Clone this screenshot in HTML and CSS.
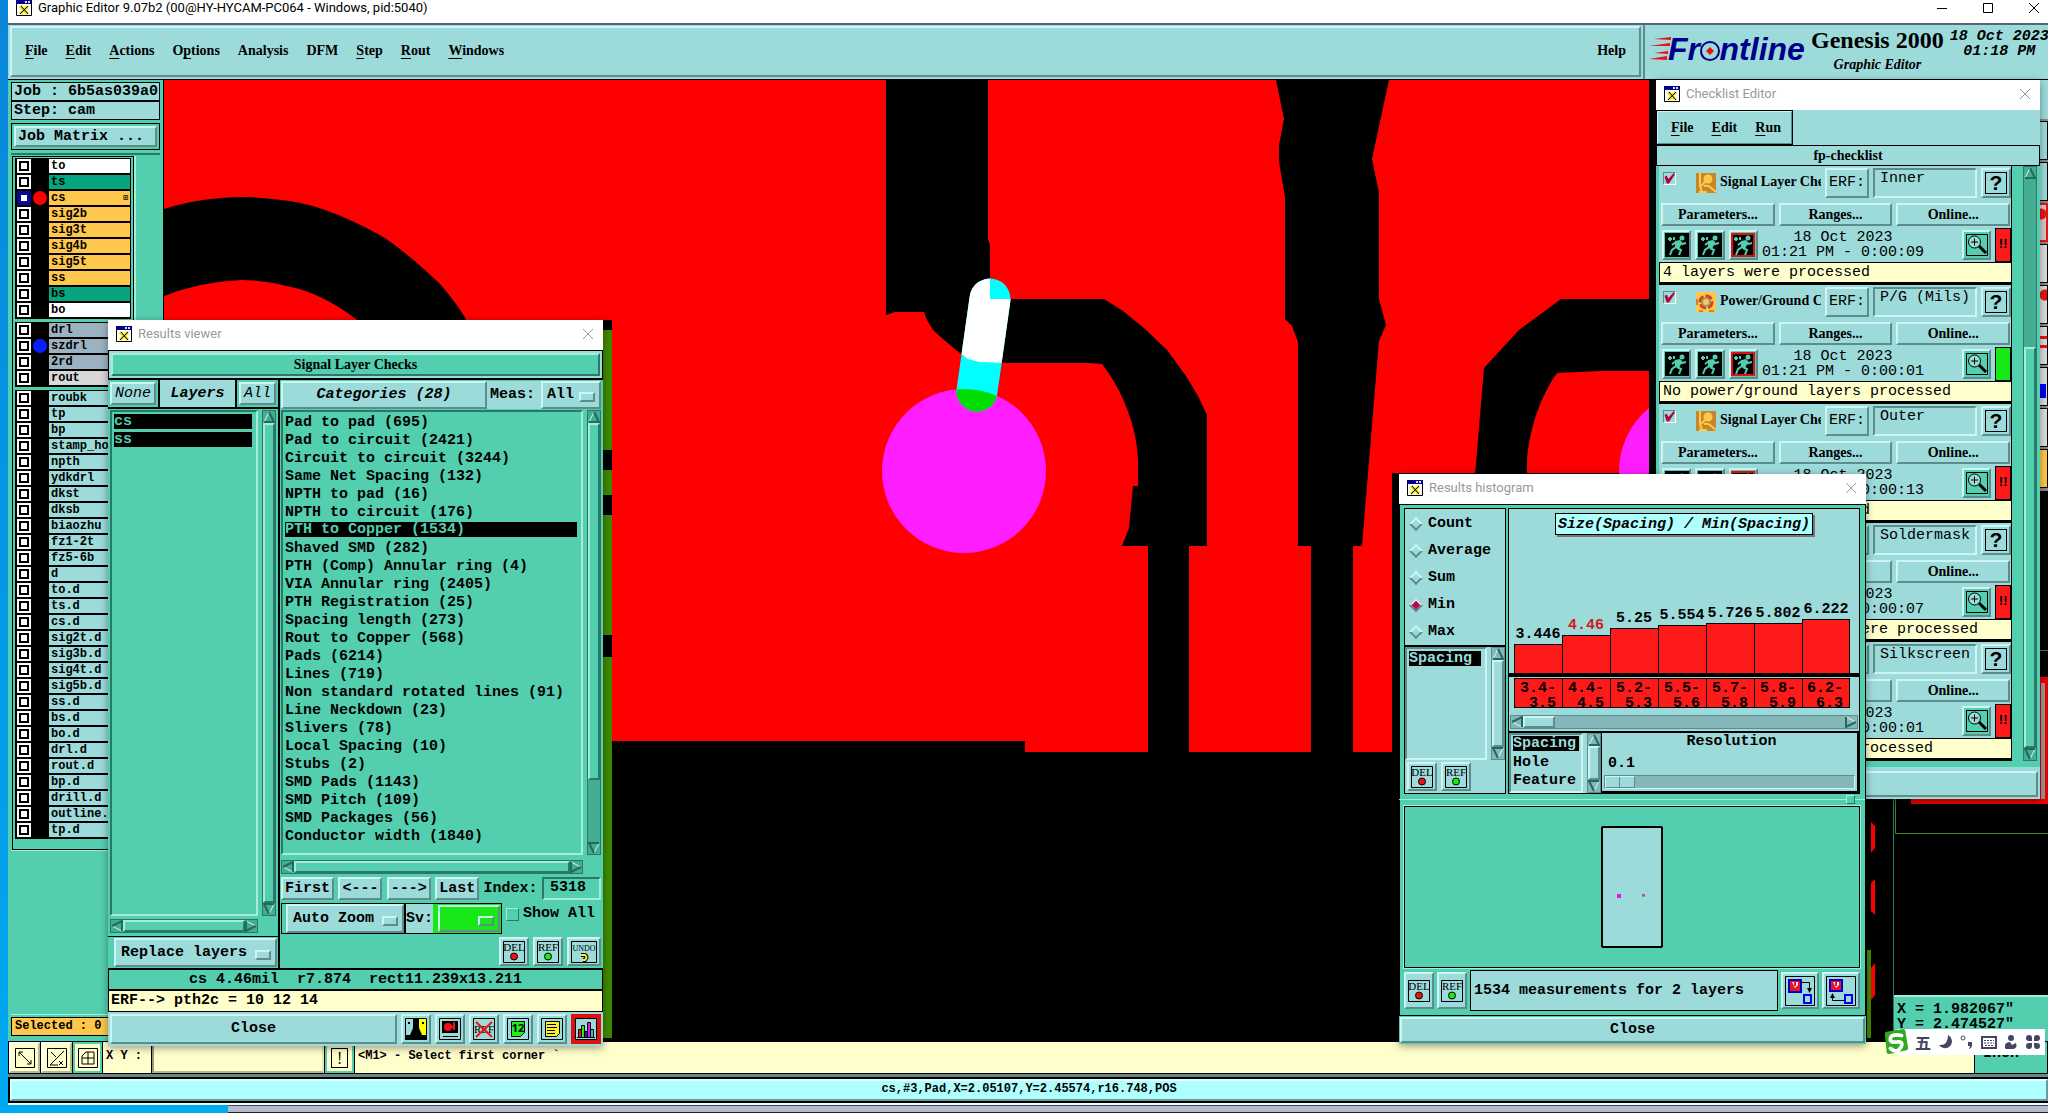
FILE: index.html
```
<!DOCTYPE html>
<html lang="en">
<head>
    <meta charset="UTF-8">
    <meta name="viewport" content="width=device-width, initial-scale=1.0">
    <title>Graphic Editor 9.07b2</title>
    <link rel="stylesheet" href="styles.css">
</head>
<body>
    <!-- shared icons -->
    <svg class="defs" width="0" height="0">
        <symbol id="i-app" viewBox="0 0 16 16"><path fill="#fff" stroke="#000" d="M.5.5h15v15H.5z"/><path fill="#00008b" d="M0 0h16v4H0z"/><path fill="#ddd" d="M9 1h2v2H9zM12 1h2v2h-2z"/><path stroke="#e8e000" stroke-width="3" d="M4 6l8 8M12 6l-8 8"/><path stroke="#000" d="M5 6l7 8M12 6l-8 8"/></symbol>
        <symbol id="i-x" viewBox="0 0 12 12"><path fill="none" stroke="currentColor" d="M1 1l10 10M11 1L1 11"/></symbol>
        <symbol id="i-del" viewBox="0 0 22 22"><path fill="none" stroke="#000" d="M.5.5h21v21H.5z"/><text x="11" y="10" class="ico-text">DEL</text><circle cx="11" cy="15.5" r="3.5" fill="#e11" stroke="#000"/></symbol>
        <symbol id="i-ref" viewBox="0 0 22 22"><path fill="none" stroke="#000" d="M.5.5h21v21H.5z"/><text x="11" y="10" class="ico-text">REF</text><circle cx="11" cy="15.5" r="3.5" fill="#1e1" stroke="#000"/></symbol>
        <symbol id="i-run" viewBox="0 0 24 24"><path fill="#000" d="M0 0h24v24H0z"/><circle cx="17" cy="5" r="2.5" fill="#53cfb0"/><path fill="#53cfb0" d="M10 8l5-1 2 3-3 6-4-1z"/><path fill="none" stroke="#53cfb0" stroke-width="2" d="M15 8l2 3 4-1M12 15l4 2-2 5M11 14l-4 3-2 5M11 9l-4 3M3 6h4M5 4v4M9 4v3"/></symbol>
        <symbol id="i-zoom" viewBox="0 0 24 24"><path fill="none" stroke="#000" d="M1.500 1.500h21v21h-21z"/><circle cx="9.500" cy="9" r="6" fill="#9ddbdb" stroke="#000"/><path stroke="#000" d="M6 9h7M9.500 5.500v7"/><path stroke="#000" stroke-width="3" d="M14 13l7 7"/></symbol>
        <symbol id="i-signal" viewBox="0 0 20 20"><path fill="#c8862c" d="M0 0h20v20H0z"/><circle cx="12" cy="6" r="4.500" fill="#ffc84c"/><path fill="none" stroke="#ffc84c" stroke-width="2" d="M4 0v13l2 6M9 9l-4 4M8 13q4-1 6 1l6 5"/><path fill="#ffc84c" d="M3 18h8v2H3z"/></symbol>
        <symbol id="i-power" viewBox="0 0 20 20"><path fill="#ffc84c" d="M0 0h20v20H0z"/><circle cx="10" cy="10" r="6" fill="none" stroke="#e33c1c" stroke-width="3" stroke-dasharray="7 2"/><circle cx="10" cy="10" r="4" fill="#ffc84c" stroke="#8a9a70" stroke-width="2"/><path fill="#c8862c" d="M0 7h2v6H0zM3 18h4v2H3zM13 18h5v2h-5z"/></symbol>
        <symbol id="i-up" viewBox="0 0 12 12"><path fill="currentColor" stroke="#d4f8f4" d="M1 11L6 1"/><path fill="none" stroke="#246a5c" stroke-width="2" d="M6 1l5 10H1"/></symbol>
    </svg>

    <main class="main-window">
        <header class="titlebar main-title">
            <svg class="app-icon"><use href="#i-app"/></svg>
            <span>Graphic Editor 9.07b2 (00@HY-HYCAM-PC064 - Windows, pid:5040)</span>
            <div class="win-buttons">
                <button aria-label="Minimize"><svg viewBox="0 0 12 12"><path stroke="#000" d="M1 6.500h10"/></svg></button>
                <button aria-label="Maximize"><svg viewBox="0 0 12 12"><path fill="none" stroke="#000" d="M1.500 1.500h9v9h-9z"/></svg></button>
                <button aria-label="Close"><svg><use href="#i-x"/></svg></button>
            </div>
        </header>

        <div class="top">
            <nav class="menubar">
                <a href="#"><u>F</u>ile</a>
                <a href="#"><u>E</u>dit</a>
                <a href="#"><u>A</u>ctions</a>
                <a href="#">O<u>p</u>tions</a>
                <a href="#">Analysis</a>
                <a href="#">DFM</a>
                <a href="#"><u>S</u>tep</a>
                <a href="#"><u>R</u>out</a>
                <a href="#"><u>W</u>indows</a>
                <a href="#" class="help">Help</a>
            </nav>
            <div class="brand">
                <svg class="logo" viewBox="0 0 162 34">
                    <path fill="#e11" d="M5 5l17-2v3zM0 12l21-3v3zM5 19l14-2v3zM0 25l18-3v4z"/>
                    <text x="19" y="26">Frontline</text>
                    <circle cx="61" cy="17" r="9" fill="#9ddbdb" stroke="#00008b" stroke-width="2"/>
                    <path fill="#e11" d="M61 13l4 4-4 4-4-4z"/>
                </svg>
                <div class="product">
                    <div class="product-name">Genesis 2000</div>
                    <div class="product-sub">Graphic Editor</div>
                </div>
                <div class="clock">18 Oct 2023<br>01:18 PM</div>
            </div>
        </div>

        <div class="workspace">
            <aside class="sidebar">
                <div class="info-box">Job : 6b5as039a0</div>
                <div class="info-box">Step: cam</div>
                <div class="matrix"><button class="raised">Job Matrix ...</button></div>
                <div class="layers">
                    <div class="layer-frame">
                        <div class="group">
                            <label class="layer white"><input type="checkbox"><i></i><span>to</span></label>
                            <label class="layer mask"><input type="checkbox"><i></i><span>ts</span></label>
                            <label class="layer copper active"><input type="checkbox" checked><i class="red"></i><span>cs<b>⊞</b></span></label>
                            <label class="layer copper"><input type="checkbox"><i></i><span>sig2b</span></label>
                            <label class="layer copper"><input type="checkbox"><i></i><span>sig3t</span></label>
                            <label class="layer copper"><input type="checkbox"><i></i><span>sig4b</span></label>
                            <label class="layer copper"><input type="checkbox"><i></i><span>sig5t</span></label>
                            <label class="layer copper"><input type="checkbox"><i></i><span>ss</span></label>
                            <label class="layer mask"><input type="checkbox"><i></i><span>bs</span></label>
                            <label class="layer white"><input type="checkbox"><i></i><span>bo</span></label>
                        </div>
                        <div class="group">
                            <label class="layer drill"><input type="checkbox"><i></i><span>drl</span></label>
                            <label class="layer drill"><input type="checkbox"><i class="blue"></i><span>szdrl</span></label>
                            <label class="layer drill"><input type="checkbox"><i></i><span>2rd</span></label>
                            <label class="layer rout"><input type="checkbox"><i></i><span>rout</span></label>
                        </div>
                        <div class="group">
                            <label class="layer"><input type="checkbox"><i></i><span>roubk</span></label>
                            <label class="layer"><input type="checkbox"><i></i><span>tp</span></label>
                            <label class="layer"><input type="checkbox"><i></i><span>bp</span></label>
                            <label class="layer"><input type="checkbox"><i></i><span>stamp_hole</span></label>
                            <label class="layer"><input type="checkbox"><i></i><span>npth</span></label>
                            <label class="layer"><input type="checkbox"><i></i><span>ydkdrl</span></label>
                            <label class="layer"><input type="checkbox"><i></i><span>dkst</span></label>
                            <label class="layer"><input type="checkbox"><i></i><span>dksb</span></label>
                            <label class="layer"><input type="checkbox"><i></i><span>biaozhu</span></label>
                            <label class="layer"><input type="checkbox"><i></i><span>fz1-2t</span></label>
                            <label class="layer"><input type="checkbox"><i></i><span>fz5-6b</span></label>
                            <label class="layer"><input type="checkbox"><i></i><span>d</span></label>
                            <label class="layer"><input type="checkbox"><i></i><span>to.d</span></label>
                            <label class="layer"><input type="checkbox"><i></i><span>ts.d</span></label>
                            <label class="layer"><input type="checkbox"><i></i><span>cs.d</span></label>
                            <label class="layer"><input type="checkbox"><i></i><span>sig2t.d</span></label>
                            <label class="layer"><input type="checkbox"><i></i><span>sig3b.d</span></label>
                            <label class="layer"><input type="checkbox"><i></i><span>sig4t.d</span></label>
                            <label class="layer"><input type="checkbox"><i></i><span>sig5b.d</span></label>
                            <label class="layer"><input type="checkbox"><i></i><span>ss.d</span></label>
                            <label class="layer"><input type="checkbox"><i></i><span>bs.d</span></label>
                            <label class="layer"><input type="checkbox"><i></i><span>bo.d</span></label>
                            <label class="layer"><input type="checkbox"><i></i><span>drl.d</span></label>
                            <label class="layer"><input type="checkbox"><i></i><span>rout.d</span></label>
                            <label class="layer"><input type="checkbox"><i></i><span>bp.d</span></label>
                            <label class="layer"><input type="checkbox"><i></i><span>drill.d</span></label>
                            <label class="layer"><input type="checkbox"><i></i><span>outline.d</span></label>
                            <label class="layer"><input type="checkbox"><i></i><span>tp.d</span></label>
                        </div>
                    </div>
                </div>
                <div class="side-fill"></div>
                <div class="selected">Selected : 0</div>
            </aside>

            <!-- board view -->
            <div class="board">
                <svg viewBox="163 80 1730 961" preserveAspectRatio="xMinYMin slice">
                    <defs>
                        <path id="trace" d="M885 80H987V240L989 245V299H1103L1122 311L1144 329L1166 350L1185 376L1197 396L1206 415V546H1188V752H1147V546H1121L1128 528L1132 486H1137V460C1136 425 1120 388 1101 364L1088 363H1007L978 362L967 359L955 350L942 339L932 330L926 320L923 312H894L885 315Z"/>
                        <clipPath id="c-trace"><use href="#trace"/></clipPath>
                        <clipPath id="c-pad"><circle cx="963" cy="471" r="82"/></clipPath>
                    </defs>
                    <path fill="#000" d="M163 80h1730v961H163z"/>
                    <path fill="#f00" d="M163 80H1648V473H1391V752H1024V741H163z"/>
                    <path fill="#000" d="M163 209Q200 197 245 197Q290 199 315 207Q345 216 384 238Q410 256 440 285Q456 304 465 319V345H375L355 319Q320 293 290 287Q262 280 240 280Q198 282 163 296z"/>
                    <use href="#trace" fill="#000"/>
                    <path fill="#000" d="M1275 80L1283 119L1278 145V162L1284 197V319L1291 326L1297 342V546H1310V752H1352V546H1361L1378 341L1385 325L1378 299V193L1371 159L1388 80z"/>
                    <path fill="#000" d="M1648 299H1560L1518 330L1483 368L1474 475H1526V460C1528 430 1540 395 1556 373L1600 371H1648z"/>
                    <path fill="#ff1eff" d="M1648 408A82 82 0 0 0 1618 475H1648z"/>
                    <circle cx="963" cy="471" r="82" fill="#ff1eff"/>
                    <g fill="none" stroke-width="41" stroke-linecap="round">
                        <path stroke="#0ff" d="M989 299L976 391"/>
                        <path stroke="#fff" clip-path="url(#c-trace)" d="M989 299L976 391"/>
                        <path stroke="#0d0" clip-path="url(#c-pad)" d="M989 299L976 391"/>
                    </g>
                    <path fill="#3f8a00" d="M600 320h11v718h-11zM1866 950h4v88h-4z"/>
                    <path fill="#000" d="M600 320h11v10h-11zM600 450h11v20h-11zM600 495h11v20h-11zM600 635h11v22h-11z"/>
                    <path fill="#f00" d="M1870 822l4 4v22l-4 5zM1870 883l4-4v36l-4-4zM1870 968l4-5v32l-4 5z"/>
                </svg>
            </div>

            <aside class="right-bar">
                <div class="tools">
                    <div class="tool-cap"></div>
                    <button class="tool" aria-label="Cut"></button>
                    <button class="tool" aria-label="Frame"></button>
                    <button class="tool warn" aria-label="Signal"></button>
                    <button class="tool gray" aria-label="Select"></button>
                    <button class="tool gray dot" aria-label="Point"></button>
                    <button class="tool gray lines" aria-label="Lines"></button>
                    <button class="tool gray box" aria-label="Box"></button>
                    <button class="tool gray" aria-label="Measure"></button>
                    <button class="tool gold" aria-label="Pick"></button>
                </div>
                <svg class="mini" viewBox="1893 490 155 504" preserveAspectRatio="xMaxYMin slice">
                    <path fill="#000" d="M1893 490h155v504h-155z"/>
                    <path fill="none" stroke="#3f8a20" d="M1895.500 649.500h160M1895.500 649v183.500h160"/>
                    <path fill="#e00" d="M1911 676h140v127h-140z"/>
                    <path fill="#999" d="M2041 682h4v116h-4z"/>
                </svg>
                <div class="coords">X = 1.982067"<br>Y = 2.474527"</div>
            </aside>
        </div>

        <footer class="command">
            <button class="cmd" aria-label="Snap"><svg viewBox="0 0 20 20"><path fill="none" stroke="#000" d="M.5.5h19v19H.5zM4 4l12 12M4 8V4h4M16 12v4h-4"/></svg></button>
            <button class="cmd" aria-label="Angle"><svg viewBox="0 0 20 20"><path fill="none" stroke="#000" d="M.5.5h19v19H.5zM3 17L17 3M3 17h8M4 4l5 5M12 13l4 4M16 13l-4 4"/></svg></button>
            <button class="cmd green" aria-label="Grid"><svg viewBox="0 0 20 20"><path fill="none" stroke="#000" d="M.5.5h19v19H.5zM4 16V8l4-4h8v12zM4 10h12M10 4v12"/></svg></button>
            <label class="xy" for="xy">X Y :</label>
            <input id="xy" type="text">
            <button class="cmd green bang"><span>!</span></button>
            <div class="message">&lt;M1&gt; - Select first corner `</div>
            <label class="unit"><select aria-label="Units"><option>Inch</option></select></label>
        </footer>
        <div class="status"><div>cs,#3,Pad,X=2.05107,Y=2.45574,r16.748,POS</div></div>
    </main>
    <div class="taskbar"></div>

    <!-- Checklist Editor -->
    <section class="window checklist">
        <header class="titlebar">
            <svg class="app-icon"><use href="#i-app"/></svg>
            <span>Checklist Editor</span>
            <button class="close-x" aria-label="Close"><svg><use href="#i-x"/></svg></button>
        </header>
        <nav class="sub-menu raised">
            <a href="#"><u>F</u>ile</a>
            <a href="#"><u>E</u>dit</a>
            <a href="#"><u>R</u>un</a>
        </nav>
        <h2>fp-checklist</h2>
        <div class="check-area">
            <div class="check-list">
                <article class="check">
                    <div class="row1">
                        <input type="checkbox" id="k1" checked>
                        <svg class="kind"><use href="#i-signal"/></svg>
                        <label for="k1">Signal Layer Checks</label>
                        <button class="raised erf">ERF:</button>
                        <input type="text" class="sunken" value="Inner" aria-label="ERF">
                        <button class="raised q"><b>?</b></button>
                    </div>
                    <div class="row2"><button class="raised">Parameters...</button><button class="raised">Ranges...</button><button class="raised">Online...</button></div>
                    <div class="row3">
                        <button class="raised ic" aria-label="Run"><svg><use href="#i-run"/></svg></button>
                        <button class="raised ic" aria-label="Run and edit"><svg><use href="#i-run"/></svg></button>
                        <button class="raised ic hot" aria-label="Run profile"><svg><use href="#i-run"/></svg></button>
                        <time>18 Oct 2023<br>01:21 PM - 0:00:09</time>
                        <button class="raised ic" aria-label="View results"><svg><use href="#i-zoom"/></svg></button>
                        <span class="state">!!</span>
                    </div>
                    <p>4 layers were processed</p>
                </article>
                <article class="check">
                    <div class="row1">
                        <input type="checkbox" id="k2" checked>
                        <svg class="kind"><use href="#i-power"/></svg>
                        <label for="k2">Power/Ground Checks</label>
                        <button class="raised erf">ERF:</button>
                        <input type="text" class="sunken" value="P/G (Mils)" aria-label="ERF">
                        <button class="raised q"><b>?</b></button>
                    </div>
                    <div class="row2"><button class="raised">Parameters...</button><button class="raised">Ranges...</button><button class="raised">Online...</button></div>
                    <div class="row3">
                        <button class="raised ic" aria-label="Run"><svg><use href="#i-run"/></svg></button>
                        <button class="raised ic" aria-label="Run and edit"><svg><use href="#i-run"/></svg></button>
                        <button class="raised ic hot" aria-label="Run profile"><svg><use href="#i-run"/></svg></button>
                        <time>18 Oct 2023<br>01:21 PM - 0:00:01</time>
                        <button class="raised ic" aria-label="View results"><svg><use href="#i-zoom"/></svg></button>
                        <span class="state ok"></span>
                    </div>
                    <p>No power/ground layers processed</p>
                </article>
                <article class="check">
                    <div class="row1">
                        <input type="checkbox" id="k3" checked>
                        <svg class="kind"><use href="#i-signal"/></svg>
                        <label for="k3">Signal Layer Checks</label>
                        <button class="raised erf">ERF:</button>
                        <input type="text" class="sunken" value="Outer" aria-label="ERF">
                        <button class="raised q"><b>?</b></button>
                    </div>
                    <div class="row2"><button class="raised">Parameters...</button><button class="raised">Ranges...</button><button class="raised">Online...</button></div>
                    <div class="row3">
                        <button class="raised ic" aria-label="Run"><svg><use href="#i-run"/></svg></button>
                        <button class="raised ic" aria-label="Run and edit"><svg><use href="#i-run"/></svg></button>
                        <button class="raised ic hot" aria-label="Run profile"><svg><use href="#i-run"/></svg></button>
                        <time>18 Oct 2023<br>01:21 PM - 0:00:13</time>
                        <button class="raised ic" aria-label="View results"><svg><use href="#i-zoom"/></svg></button>
                        <span class="state">!!</span>
                    </div>
                    <p>2 layers were processed</p>
                </article>
                <article class="check">
                    <div class="row1">
                        <input type="checkbox" id="k4" checked>
                        <svg class="kind"><use href="#i-signal"/></svg>
                        <label for="k4">Solder Mask Checks</label>
                        <button class="raised erf">ERF:</button>
                        <input type="text" class="sunken" value="Soldermask" aria-label="ERF">
                        <button class="raised q"><b>?</b></button>
                    </div>
                    <div class="row2"><button class="raised">Parameters...</button><button class="raised">Ranges...</button><button class="raised">Online...</button></div>
                    <div class="row3">
                        <button class="raised ic" aria-label="Run"><svg><use href="#i-run"/></svg></button>
                        <button class="raised ic" aria-label="Run and edit"><svg><use href="#i-run"/></svg></button>
                        <button class="raised ic hot" aria-label="Run profile"><svg><use href="#i-run"/></svg></button>
                        <time>18 Oct 2023<br>01:21 PM - 0:00:07</time>
                        <button class="raised ic" aria-label="View results"><svg><use href="#i-zoom"/></svg></button>
                        <span class="state">!!</span>
                    </div>
                    <p>2 solder mask layers were processed</p>
                </article>
                <article class="check">
                    <div class="row1">
                        <input type="checkbox" id="k5" checked>
                        <svg class="kind"><use href="#i-signal"/></svg>
                        <label for="k5">Silk Screen Checks</label>
                        <button class="raised erf">ERF:</button>
                        <input type="text" class="sunken" value="Silkscreen" aria-label="ERF">
                        <button class="raised q"><b>?</b></button>
                    </div>
                    <div class="row2"><button class="raised">Parameters...</button><button class="raised">Ranges...</button><button class="raised">Online...</button></div>
                    <div class="row3">
                        <button class="raised ic" aria-label="Run"><svg><use href="#i-run"/></svg></button>
                        <button class="raised ic" aria-label="Run and edit"><svg><use href="#i-run"/></svg></button>
                        <button class="raised ic hot" aria-label="Run profile"><svg><use href="#i-run"/></svg></button>
                        <time>18 Oct 2023<br>01:21 PM - 0:00:01</time>
                        <button class="raised ic" aria-label="View results"><svg><use href="#i-zoom"/></svg></button>
                        <span class="state">!!</span>
                    </div>
                    <p>No silkscreen layers processed</p>
                </article>
            </div>
            <div class="vscroll low"><svg class="up"><use href="#i-up"/></svg><i></i><svg class="down"><use href="#i-up"/></svg></div>
        </div>
        <button class="raised check-close" aria-label="Close"></button>
    </section>

    <!-- Results viewer -->
    <section class="window results">
        <header class="titlebar">
            <svg class="app-icon"><use href="#i-app"/></svg>
            <span>Results viewer</span>
            <button class="close-x" aria-label="Close"><svg><use href="#i-x"/></svg></button>
        </header>
        <h2><span class="raised">Signal Layer Checks</span></h2>
        <div class="panes">
            <div class="pane pane-layers">
                <div class="pane-head">
                    <div><button class="raised">None</button></div>
                    <h3>Layers</h3>
                    <div><button class="raised">All</button></div>
                </div>
                <div class="scroll-box">
                    <ul class="list">
                        <li class="on">cs</li>
                        <li class="on">ss</li>
                    </ul>
                    <div class="vscroll full"><svg class="up"><use href="#i-up"/></svg><i></i><svg class="down"><use href="#i-up"/></svg></div>
                </div>
                <div class="hscroll"><svg class="left"><use href="#i-up"/></svg><i></i><svg class="right"><use href="#i-up"/></svg></div>
                <div class="replace"><label class="raised option"><select aria-label="Replace layers"><option>Replace layers</option></select></label></div>
            </div>
            <div class="pane pane-cats">
                <div class="pane-head">
                    <button class="raised">Categories (28)</button>
                    <label for="meas">Meas:</label>
                    <span class="raised option"><select id="meas"><option>All</option></select></span>
                </div>
                <div class="scroll-box">
                    <ul class="list">
                        <li>Pad to pad (695)</li>
                        <li>Pad to circuit (2421)</li>
                        <li>Circuit to circuit (3244)</li>
                        <li>Same Net Spacing (132)</li>
                        <li>NPTH to pad (16)</li>
                        <li>NPTH to circuit (176)</li>
                        <li class="on">PTH to Copper (1534)</li>
                        <li>Shaved SMD (282)</li>
                        <li>PTH (Comp) Annular ring (4)</li>
                        <li>VIA Annular ring (2405)</li>
                        <li>PTH Registration (25)</li>
                        <li>Spacing length (273)</li>
                        <li>Rout to Copper (568)</li>
                        <li>Pads (6214)</li>
                        <li>Lines (719)</li>
                        <li>Non standard rotated lines (91)</li>
                        <li>Line Neckdown (23)</li>
                        <li>Slivers (78)</li>
                        <li>Local Spacing (10)</li>
                        <li>Stubs (2)</li>
                        <li>SMD Pads (1143)</li>
                        <li>SMD Pitch (109)</li>
                        <li>SMD Packages (56)</li>
                        <li>Conductor width (1840)</li>
                    </ul>
                    <div class="vscroll part"><svg class="up"><use href="#i-up"/></svg><i></i><svg class="down"><use href="#i-up"/></svg></div>
                </div>
                <div class="hscroll"><svg class="left"><use href="#i-up"/></svg><i></i><svg class="right"><use href="#i-up"/></svg></div>
                <div class="pager">
                    <button class="raised">First</button>
                    <button class="raised">&lt;---</button>
                    <button class="raised">---&gt;</button>
                    <button class="raised">Last</button>
                    <label for="idx">Index:</label>
                    <input id="idx" class="sunken" type="text" value="5318">
                </div>
                <div class="zoomrow">
                    <div class="zoomrow-box">
                        <label class="raised option"><select aria-label="Zoom"><option>Auto Zoom</option></select></label>
                        <label for="sv" class="sv">Sv:</label>
                        <span class="sv-color"><span class="raised option"><select id="sv"><option></option></select></span></span>
                    </div>
                    <label class="show-all"><input type="checkbox">Show All</label>
                </div>
                <div class="acts">
                    <button class="raised" aria-label="Delete"><svg><use href="#i-del"/></svg></button>
                    <button class="raised" aria-label="Reference"><svg><use href="#i-ref"/></svg></button>
                    <button class="raised wide" aria-label="Undo"><svg viewBox="0 0 26 22"><path fill="none" stroke="#000" d="M.5.5h25v21H.5z"/><text x="13" y="10" class="ico-undo">UNDO</text><path fill="none" stroke="#000" stroke-width="4" d="M10 14h4q3 2 0 5h-2"/><path fill="none" stroke="#fe3" stroke-width="2" d="M10 14h4q3 2 0 5h-2"/></svg></button>
                </div>
            </div>
        </div>
        <div class="measure">cs 4.46mil&nbsp; r7.874&nbsp; rect11.239x13.211</div>
        <div class="erf-line">ERF--&gt; pth2c = 10 12 14</div>
        <div class="bottom">
            <button class="raised close">Close</button>
            <button class="raised" aria-label="Highlight"><svg viewBox="0 0 22 22"><path fill="#9ddbdb" d="M0 0h11v22H0z"/><path fill="#ff0" d="M11 0h11v22H11z"/><path fill="none" stroke="#000" d="M.5.5h21v21H.5z"/><path fill="#000" d="M8 0h6v10l3 7h5v5H0v-5h5l3-7zM3 4h2v2H3zM17 4h2v2h-2z"/></svg></button>
            <button class="raised" aria-label="Snapshot"><svg viewBox="0 0 22 22"><path fill="none" stroke="#000" d="M.5.5h21v21H.5z"/><path fill="#000" d="M3 3h16v12H3z"/><circle cx="9" cy="9" r="4" fill="#e11"/><path stroke="#e11" stroke-width="2" d="M9 9h7M15 4v8"/><path stroke="#000" d="M4 18.500h15"/></svg></button>
            <button class="raised" aria-label="Clear reference"><svg viewBox="0 0 22 22"><path fill="none" stroke="#000" d="M.5.5h21v21H.5z"/><text x="11" y="15" class="ico-text">REF</text><path stroke="#e11" stroke-width="2" d="M3 4l16 15M19 4L3 19"/></svg></button>
            <button class="raised" aria-label="Numbers"><svg viewBox="0 0 22 22"><path fill="none" stroke="#000" d="M.5.5h21v21H.5z"/><path fill="#2e2" stroke="#000" d="M4.500 3.500h13v11l-4 4h-9z"/><text x="11" y="14" class="ico-num">12</text></svg></button>
            <button class="raised" aria-label="Report"><svg viewBox="0 0 22 22"><path fill="none" stroke="#000" d="M.5.5h21v21H.5z"/><path fill="#fe3" stroke="#000" d="M4.500 3.500h14v12l-3 3h-11z"/><path stroke="#000" d="M6 6.500h9M6 9.500h10M6 12.500h8M6 15.500h8"/></svg></button>
            <button class="raised hot" aria-label="Histogram"><svg viewBox="0 0 22 22"><path fill="none" stroke="#000" d="M.5.5h21v21H.5zM2 19.500h18"/><path fill="#e11" stroke="#000" d="M3.500 11.500h3v8h-3z"/><path fill="#2e2" stroke="#000" d="M6.500 7.500h3v12h-3z"/><path fill="#22c" stroke="#000" d="M9.500 13.500h3v6h-3z"/><path fill="#e1e" stroke="#000" d="M12.500 4.500h3v15h-3z"/><path fill="#2cc" stroke="#000" d="M15.500 11.500h3v8h-3z"/></svg></button>
        </div>
    </section>

    <!-- Results histogram -->
    <section class="window histogram">
        <header class="titlebar">
            <svg class="app-icon"><use href="#i-app"/></svg>
            <span>Results histogram</span>
            <button class="close-x" aria-label="Close"><svg><use href="#i-x"/></svg></button>
        </header>
        <div class="hist-body">
            <div class="hist-top">
                <div class="hist-left">
                    <div class="radios">
                        <label><input type="radio" name="stat">Count</label>
                        <label><input type="radio" name="stat">Average</label>
                        <label><input type="radio" name="stat">Sum</label>
                        <label><input type="radio" name="stat" checked>Min</label>
                        <label><input type="radio" name="stat">Max</label>
                    </div>
                    <div class="scroll-box">
                        <ul class="list"><li class="on">Spacing</li></ul>
                        <div class="vscroll full"><svg class="up"><use href="#i-up"/></svg><i></i><svg class="down"><use href="#i-up"/></svg></div>
                    </div>
                    <div class="acts">
                        <button class="raised" aria-label="Delete"><svg><use href="#i-del"/></svg></button>
                        <button class="raised" aria-label="Reference"><svg><use href="#i-ref"/></svg></button>
                    </div>
                </div>
                <div class="chart">
                    <h3>Size(Spacing) / Min(Spacing)</h3>
                    <div class="bars">
                        <div>3.446<i style="height: 29px"></i></div>
                        <div class="pick">4.46<i style="height: 38px"></i></div>
                        <div>5.25<i style="height: 45px"></i></div>
                        <div>5.554<i style="height: 48px"></i></div>
                        <div>5.726<i style="height: 50px"></i></div>
                        <div>5.802<i style="height: 50px"></i></div>
                        <div>6.222<i style="height: 54px"></i></div>
                    </div>
                    <div class="bins">
                        <div>3.4-<br>3.5</div><div>4.4-<br>4.5</div><div>5.2-<br>5.3</div><div>5.5-<br>5.6</div><div>5.7-<br>5.8</div><div>5.8-<br>5.9</div><div>6.2-<br>6.3</div>
                    </div>
                    <div class="hscroll short"><svg class="left"><use href="#i-up"/></svg><i></i><svg class="right"><use href="#i-up"/></svg></div>
                    <div class="chart-foot">
                        <div class="scroll-box">
                            <ul class="list"><li class="on">Spacing</li><li>Hole</li><li>Feature</li></ul>
                            <div class="vscroll full"><svg class="up"><use href="#i-up"/></svg><i></i><svg class="down"><use href="#i-up"/></svg></div>
                        </div>
                        <div class="resolution">
                            <label for="res">Resolution</label>
                            <output>0.1</output>
                            <input id="res" type="range" min="0" max="100" value="0">
                        </div>
                    </div>
                </div>
            </div>
            <div class="sash"><i></i></div>
            <div class="overview">
                <svg viewBox="0 0 62 122"><rect x="1" y="1" width="60" height="120" rx="1" fill="#9ddbdb" stroke="#000" stroke-width="2"/><path fill="#e1e" d="M16 68h4v4h-4z"/><path fill="#c4a" d="M41 68h3v2h-3z"/><path fill="#6b6" d="M41 70h3v1h-3z"/></svg>
            </div>
            <div class="hist-foot">
                <button class="raised" aria-label="Delete"><svg><use href="#i-del"/></svg></button>
                <button class="raised" aria-label="Reference"><svg><use href="#i-ref"/></svg></button>
                <div class="count">1534 measurements for 2 layers</div>
                <button class="raised big" aria-label="Zoom in"><svg viewBox="0 0 30 30"><path fill="none" stroke="#000" d="M.5.5h29v29H.5zM17 6.500h7.500V14"/><path fill="#000" d="M22 12h5l-2.500 5z"/><path fill="#e12" stroke="#00c" stroke-width="2" d="M4 4h12v12H4z"/><path fill="#eee" d="M7 6h2v4h2V6h2v3l-3 3z"/><path fill="none" stroke="#00e" stroke-width="2" d="M19 19h7v8h-7z"/></svg></button>
                <button class="raised big" aria-label="Zoom out"><svg viewBox="0 0 30 30"><path fill="none" stroke="#000" d="M.5.5h29v29H.5zM18 24.500H6.500V21"/><path fill="#000" d="M4 22h5l-2.500-5z"/><path fill="#e12" stroke="#00c" stroke-width="2" d="M4 4h12v11H4z"/><path fill="#eee" d="M7 6h2v4h2V6h2v3l-3 3z"/><path fill="none" stroke="#00e" stroke-width="2" d="M19 19h7v8h-7z"/></svg></button>
            </div>
        </div>
        <button class="raised hist-close">Close</button>
    </section>

    <!-- input method bar -->
    <div class="ime">
        <svg class="ime-logo" viewBox="0 0 28 28"><path fill="#2faa1f" d="M2 5Q2 3 4 3l18-3q2 0 2 2l3 18q0 3-2 3L7 27q-3 0-3-2z"/><path fill="none" stroke="#fff" stroke-width="4" stroke-linecap="round" d="M20 7Q9 5 8 10t7 4 4 6-11 1"/></svg>
        <span>五</span>
        <svg viewBox="0 0 16 16"><path fill="#446" d="M11 1a7 7 0 1 1-9 10q9 1 9-10z"/></svg>
        <svg viewBox="0 0 16 16"><circle cx="4" cy="4" r="2" fill="none" stroke="#446"/><path fill="#446" d="M9 8h4v3q0 3-3 4 1-2 1-3H9z"/></svg>
        <svg viewBox="0 0 16 16"><path fill="none" stroke="#446" stroke-width="2" d="M1 3h14v11H1z"/><path stroke="#446" stroke-dasharray="2 1" d="M3 6.500h10M3 9h10M4 11.500h8"/></svg>
        <svg viewBox="0 0 16 16"><circle cx="8" cy="4" r="3" fill="#446"/><path fill="#446" d="M2 14q-1-6 5-6l2 3 4-2q2 6-4 6H3z"/></svg>
        <svg viewBox="0 0 16 16"><path fill="#446" d="M1 4a3 3 0 1 1 6 0v3H4a3 3 0 0 1-3-3zM15 4a3 3 0 1 0-6 0v3h3a3 3 0 0 0 3-3zM1 12a3 3 0 1 0 6 0V9H4a3 3 0 0 0-3 3zM15 12a3 3 0 1 1-6 0V9h3a3 3 0 0 1 3 3z"/></svg>
    </div>
</body>
</html>
```
FILE: styles.css
```
:root {
    --green: #53cfb0;
    --green-light: #a4ecdc;
    --green-dark: #2c7868;
    --teal: #9ddbdb;
    --teal-light: #cdf5f5;
    --teal-dark: #5c8c8c;
    --cream: #ffffcc;
    --gold: #ffc84c;
    --red: #ff1a1a;
    --mono: "Liberation Mono", "Courier New", monospace;
    --serif: "Liberation Serif", "Times New Roman", serif;
    --sans: "Open Sans", "Noto Sans", sans-serif;
}
* {
    box-sizing: border-box;
}
body {
    margin: 0;
    height: 100vh;
    display: flex;
    flex-direction: column;
    overflow: hidden;
    background: linear-gradient(#0a86d8, #00aaf0);
    font: bold 15px/18px var(--mono);
    color: #000;
}
button, input, select {
    font: inherit;
    color: inherit;
    margin: 0;
    padding: 0;
    border: 0;
    border-radius: 0;
    background: none;
}
input {
    min-width: 0;
}
select {
    appearance: none;
    width: 100%;
}
a {
    color: inherit;
    text-decoration: none;
}
u {
    text-underline-offset: 3px;
}
h2, h3, p, ul {
    margin: 0;
    padding: 0;
    font: inherit;
    list-style: none;
}
svg {
    display: block;
    flex-shrink: 0;
}
.defs {
    position: absolute;
}
.raised {
    border: 2px solid;
    border-color: var(--teal-light) var(--teal-dark) var(--teal-dark) var(--teal-light);
    background: var(--teal);
}
.sunken {
    border: 2px solid;
    border-color: var(--green-dark) var(--green-light) var(--green-light) var(--green-dark);
}
.ico-text {
    font: 11px var(--serif);
    text-anchor: middle;
}
.ico-undo {
    font: 8px var(--serif);
    text-anchor: middle;
}
.ico-num {
    font: bold 11px var(--sans);
    text-anchor: middle;
}

/* title bars */
.titlebar {
    display: flex;
    align-items: center;
    height: 30px;
    padding: 0 7px 2px 8px;
    gap: 6px;
    background: #fff;
    color: #999;
    font: 13px/20px Roboto, var(--sans);
}
.app-icon {
    width: 16px;
    height: 16px;
}
.close-x {
    margin-left: auto;
    padding-right: 2px;
}
.close-x svg, .win-buttons svg {
    width: 12px;
    height: 12px;
}
.main-title {
    height: 23px;
    padding-bottom: 8px;
    color: #000;
}
.win-buttons {
    display: flex;
    gap: 34px;
    margin-left: auto;
    padding-right: 1px;
}

/* main window */
.main-window {
    flex: 1;
    min-height: 0;
    margin-left: 8px;
    display: flex;
    flex-direction: column;
    background: #000;
}
.top {
    display: flex;
    height: 57px;
    border-top: 2px solid #567;
    border-bottom: 1px solid #000;
    background: var(--teal);
}
.menubar {
    flex: 1;
    display: flex;
    align-items: center;
    gap: 18px;
    margin: 1px 2px 2px;
    padding: 0 13px 2px;
    border: 2px solid;
    border-color: var(--teal-light) var(--teal-dark) var(--teal-dark) var(--teal-light);
    font: bold 14px/18px var(--serif);
}
.help {
    margin-left: auto;
}
.brand {
    display: flex;
    width: 405px;
    padding-left: 4px;
    border-left: 2px solid var(--teal-dark);
}
.logo {
    width: 162px;
    height: 34px;
    margin-top: 9px;
}
.logo text {
    font: italic bold 32px "Liberation Sans", Arial, sans-serif;
    fill: #00008b;
}
.product {
    width: 140px;
    text-align: center;
    font-family: var(--serif);
    white-space: nowrap;
}
.product-name {
    font-size: 24px;
    line-height: 30px;
}
.product-sub {
    font-size: 14px;
    font-style: italic;
    line-height: 20px;
}
.clock {
    padding: 4px 0 0 6px;
    font-style: italic;
    line-height: 15px;
    text-align: center;
    white-space: nowrap;
}

.workspace {
    flex: 1;
    min-height: 0;
    display: flex;
}
.sidebar {
    width: 156px;
    display: flex;
    flex-direction: column;
    padding: 2px 3px 5px;
    background: var(--green);
    border-right: 1px solid #000;
}
.info-box {
    height: 19px;
    padding-left: 2px;
    line-height: 18px;
    border: 1px solid #000;
    background: var(--teal);
    white-space: nowrap;
}
.matrix {
    margin: 3px 0;
    padding: 2px;
    border: 1px solid #000;
}
.matrix button {
    display: block;
    width: 100%;
    height: 21px;
    padding-left: 2px;
    text-align: left;
    line-height: 17px;
}
.layers {
    border-top: 2px solid var(--green-dark);
    border-bottom: 1px solid var(--green-light);
    padding-top: 1px;
    padding-left: 1px;
}
.layer-frame {
    width: 122px;
    padding: 1px 2px 10px;
    border: 1px solid #000;
    display: flex;
    flex-direction: column;
    gap: 3px;
    box-shadow: 2px 0 0 var(--green-light);
}
.group {
    display: grid;
    gap: 2px;
    padding: 1px 1px 2px 2px;
    background: #000;
    font-size: 12px;
    line-height: 14px;
}
.layer {
    display: grid;
    grid-template-columns: 14px 18px 1fr;
    height: 14px;
}
.layer input {
    appearance: none;
    width: 14px;
    height: 14px;
    background: #fff;
    box-shadow: inset 0 0 0 2px #fff, inset 0 0 0 4px #000;
}
.layer.active input {
    box-shadow: inset 0 0 0 4px #0a0a90;
}
.layer i {
    width: 14px;
    height: 14px;
    margin-left: 2px;
    border-radius: 50%;
}
.red {
    background: #f00;
}
.blue {
    background: #0a1eff;
}
.layer span {
    display: flex;
    justify-content: space-between;
    padding: 0 2px;
    overflow: hidden;
    background: var(--teal);
    white-space: nowrap;
}
.layer span b {
    font-size: 8px;
}
.white span {
    background: #fff;
}
.mask span {
    background: #05a57d;
}
.copper span {
    background: var(--gold);
}
.drill span {
    background: #9db2c0;
}
.rout span {
    background: #d8d8d8;
}
.side-fill {
    flex: 1;
    border-bottom: 1px solid var(--green-light);
}
.selected {
    height: 19px;
    margin-top: 2px;
    padding-left: 3px;
    border: 1px solid #000;
    background: var(--gold);
    font-size: 12px;
    line-height: 17px;
}
.board {
    flex: 1;
    min-width: 0;
}
.board svg {
    width: 100%;
    height: 100%;
}
.right-bar {
    width: 155px;
    display: flex;
    flex-direction: column;
    border-left: 1px solid var(--green-dark);
}
.tools {
    display: flex;
    flex-direction: column;
    gap: 2px;
    padding-bottom: 3px;
    background: #888;
}
.tool-cap {
    height: 39px;
    background: var(--teal);
}
.tool {
    height: 39px;
    border: 1px solid #000;
    background: var(--teal);
}
.warn {
    border: 2px solid #e11;
    background: radial-gradient(circle at 145px 9px, #e11 5px, transparent 6px), #ccc;
}
.gray {
    background: #ddd;
}
.dot {
    background: radial-gradient(circle at 150px 9px, #e11 5px, transparent 6px), #ddd;
}
.lines {
    background: linear-gradient(transparent 9px, #e11 9px 12px, transparent 12px 18px, #e11 18px 21px, transparent 21px), #ddd;
}
.box {
    background: linear-gradient(#00e, #00e) 145px 16px / 6px 14px no-repeat, #ddd;
}
.gold {
    background: var(--gold);
}
.mini {
    flex: 1;
    min-height: 0;
    width: 100%;
}
.coords {
    height: 46px;
    padding: 5px 3px;
    border-top: 2px solid var(--green-light);
    background: var(--green);
    line-height: 15px;
}

/* command line */
.command {
    display: flex;
    height: 33px;
    padding: 1px;
    gap: 1px;
    background: #000;
    font-size: 12px;
}
.cmd {
    display: grid;
    place-items: center;
    width: 31px;
    border: 2px solid;
    border-color: #fff #b8b890 #b8b890 #fff;
    background: var(--cream);
}
.cmd svg {
    width: 20px;
    height: 20px;
}
.cmd.green {
    width: 29px;
    border-color: var(--green);
}
.bang span {
    width: 17px;
    border: 1px solid #000;
    font: 16px/18px var(--sans);
}
.xy {
    width: 48px;
    padding-left: 3px;
    background: var(--cream);
    line-height: 28px;
    font-size: 12px;
    white-space: nowrap;
}
.command input {
    width: 172px;
    border: 2px solid;
    border-color: #99997a #e8e8b8 #b8b890 #99997a;
    background: var(--cream);
}
.message {
    flex: 1;
    padding-left: 3px;
    background: var(--cream);
    line-height: 28px;
    white-space: nowrap;
}
.unit {
    width: 72px;
    padding: 3px 0 3px 8px;
    background: var(--green);
    font-size: 15px;
}
.status {
    height: 31px;
    padding: 2px 0 2px 2px;
    border-top: 3px solid #688;
    border-bottom: 2px solid #eff;
    background: #000;
    text-align: center;
    font-size: 12px;
    line-height: 17px;
}
.status div {
    height: 100%;
    border: 2px solid;
    border-color: #dff #6a9a9a #6a9a9a #dff;
    background: #b0ffff;
}
.taskbar {
    height: 8px;
    margin-left: 228px;
    border-top: 1px solid #445;
    border-bottom: 1px solid #222;
    background: #b4bccb;
}

/* floating windows */
.window {
    position: absolute;
    display: flex;
    flex-direction: column;
    box-shadow: 0 2px 8px rgba(0, 0, 0, 0.4);
}
.vscroll {
    display: flex;
    flex-direction: column;
    width: 14px;
    border: 1px solid var(--green-dark);
    background: #43ac93;
}
.vscroll svg, .hscroll svg {
    width: 12px;
    height: 12px;
    color: var(--green);
}
.vscroll i, .hscroll i {
    flex: 1;
    border: 2px solid;
    border-color: var(--green-light) var(--green-dark) var(--green-dark) var(--green-light);
    background: var(--green);
}
.vscroll.part i {
    flex: none;
    height: 357px;
}
.vscroll .down {
    margin-top: auto;
    transform: rotate(180deg);
}
.vscroll.low i {
    margin-top: 168px;
}
.hscroll {
    display: flex;
    height: 14px;
    border: 1px solid var(--green-dark);
    background: #43ac93;
}
.hscroll .left {
    transform: rotate(-90deg);
}
.hscroll .right {
    margin-left: auto;
    transform: rotate(90deg);
}
.scroll-box {
    display: flex;
    gap: 4px;
}
.list {
    flex: 1;
    min-width: 0;
    padding: 2px 4px 3px 2px;
    border: 2px solid;
    border-color: var(--green-dark) var(--green-light) var(--green-light) var(--green-dark);
    white-space: nowrap;
}
.list li {
    line-height: 18px;
}
.list .on {
    height: 15px;
    margin-bottom: 3px;
    line-height: 15px;
    background: #000;
    color: var(--green);
}
.option {
    display: block;
    position: relative;
}
.option::after {
    content: "";
    position: absolute;
    right: 4px;
    top: 50%;
    width: 12px;
    height: 6px;
    margin-top: -3px;
    border: 2px solid;
    border-color: var(--teal-light) var(--teal-dark) var(--teal-dark) var(--teal-light);
    pointer-events: none;
}

/* Checklist Editor */
.checklist {
    left: 1656px;
    top: 80px;
    width: 384px;
    background: var(--teal);
}
.sub-menu {
    display: flex;
    align-items: center;
    gap: 18px;
    align-self: flex-start;
    height: 35px;
    width: 137px;
    padding-left: 13px;
    outline: 1px solid #000;
    outline-offset: -1px;
    font: bold 14px/18px var(--serif);
}
.checklist h2 {
    height: 21px;
    border: 1px solid #000;
    text-align: center;
    font: bold 14px/19px var(--serif);
}
.check-area {
    display: flex;
    gap: 11px;
    padding: 0 3px 6px;
    background: var(--green);
}
.check-list {
    flex: 1;
    min-width: 0;
}
.check {
    padding-top: 2px;
    border-bottom: 3px solid #000;
    border-right: 1px solid #000;
    background: var(--teal);
    font-weight: normal;
}
.row1 {
    display: flex;
    gap: 4px;
    height: 30px;
    padding: 0 0 0 4px;
}
.row1 input[type="checkbox"] {
    appearance: none;
    width: 13px;
    height: 13px;
    margin: 4px 16px 0 0;
    border: 1px solid;
    border-color: var(--teal-dark) #fff #fff var(--teal-dark);
}
.row1 input[type="checkbox"]:checked::before {
    content: "";
    display: block;
    width: 11px;
    height: 11px;
    background: #b0003c;
    clip-path: polygon(5% 35%, 25% 25%, 40% 55%, 90% 0, 100% 12%, 45% 95%, 25% 95%);
}
.kind {
    width: 20px;
    height: 20px;
    margin-top: 5px;
}
.row1 label {
    flex: 1;
    min-width: 0;
    overflow: hidden;
    white-space: nowrap;
    font: bold 14px/28px var(--serif);
}
.erf {
    width: 44px;
}
.row1 .sunken {
    width: 104px;
    padding: 0 0 8px 5px;
    border-color: var(--teal-dark) var(--teal-light) var(--teal-light) var(--teal-dark);
}
.q {
    width: 30px;
    padding: 2px;
}
.q b {
    display: block;
    height: 22px;
    border: 1px solid #000;
    font: bold 21px/20px "Liberation Sans", sans-serif;
}
.row2 {
    display: grid;
    grid-template-columns: 1fr 1fr 1fr;
    gap: 4px;
    height: 23px;
    margin: 5px 1px 2px 2px;
    font: bold 14px/18px var(--serif);
}
.row3 {
    display: flex;
    align-items: center;
    gap: 4px;
    height: 34px;
    padding-left: 3px;
}
.ic {
    width: 30px;
    height: 30px;
    background: var(--green);
}
.ic svg {
    width: 24px;
    height: 24px;
    margin: 0 auto;
}
.hot svg {
    outline: 2px solid #d11;
    outline-offset: -2px;
}
.row3 time {
    flex: 1;
    line-height: 15px;
    text-align: center;
    white-space: nowrap;
    padding-right: 34px;
}
.state {
    align-self: stretch;
    width: 16px;
    border: 1px solid #000;
    background: var(--red);
    font: bold 13px/30px "Liberation Sans", sans-serif;
    text-align: center;
}
.state.ok {
    background: #18e818;
}
.check p {
    height: 20px;
    padding-left: 3px;
    border-top: 1px solid #000;
    border-left: 1px solid #000;
    background: var(--cream);
    line-height: 19px;
    white-space: nowrap;
}
.check-close {
    height: 26px;
    margin: 4px 2px 2px;
}

/* Results viewer */
.results {
    left: 108px;
    top: 320px;
    width: 495px;
    background: var(--green);
}
.results h2 {
    padding: 2px;
    border: 1px solid #000;
    border-bottom-width: 2px;
    background: var(--teal);
    text-align: center;
    font: bold 14px/19px var(--serif);
}
.results h2 .raised {
    display: block;
    border-color: var(--green-light) var(--green-dark) var(--green-dark) var(--green-light);
    background: var(--green);
}
.panes {
    display: grid;
    grid-template-columns: 172px 1fr;
    border-bottom: 2px solid #000;
}
.pane {
    min-width: 0;
    display: flex;
    flex-direction: column;
    gap: 3px;
}
.pane-layers {
    border-right: 2px solid #000;
}
.pane-head {
    display: flex;
    height: 28px;
    white-space: nowrap;
}
.pane-layers .pane-head {
    gap: 2px;
    background: #000;
    border-bottom: 2px solid #000;
    height: 29px;
    margin-bottom: -2px;
    font-style: italic;
}
.pane-layers .pane-head div {
    padding: 2px;
    background: var(--green);
}
.pane-layers .pane-head button {
    height: 23px;
    padding: 0 3px;
    font-weight: normal;
    font-style: italic;
    line-height: 19px;
}
.pane-layers h3 {
    flex: 1;
    background: var(--teal);
    text-align: center;
    line-height: 28px;
    font-style: italic;
}
.pane-layers .scroll-box {
    flex: 1;
    padding-left: 2px;
}
.pane-layers .vscroll {
    margin-right: 2px;
}
.pane-layers .hscroll {
    margin: 0 20px 0 2px;
}
.replace {
    height: 32px;
    padding: 1px 1px 1px 6px;
    border-top: 1px solid #000;
}
.replace .option {
    height: 29px;
}
.option select {
    height: 100%;
    padding-left: 5px;
}
.pane-cats {
    padding: 1px 2px 0 1px;
}
.pane-cats .pane-head {
    background: var(--teal);
}
.pane-head > button {
    flex: 1;
    font-style: italic;
}
.pane-head label {
    padding: 0 6px 0 3px;
    line-height: 27px;
}
.pane-head .option {
    width: 60px;
}
.pane-head .option select {
    padding-left: 4px;
}
.pane-cats .scroll-box {
    margin-top: -2px;
}
.pane-cats .list {
    padding-bottom: 7px;
}
.pane-cats .hscroll {
    margin: 2px 18px 0 0;
}
.pager {
    display: flex;
    justify-content: space-between;
    height: 23px;
    line-height: 19px;
}
.pager button {
    padding: 0 2px;
}
.pager label {
    line-height: 23px;
}
.pager input {
    width: 59px;
    padding: 0 0 2px 6px;
}
.zoomrow {
    display: flex;
    gap: 4px;
}
.zoomrow-box {
    display: flex;
    height: 31px;
    border: 1px solid #000;
}
.zoomrow .option {
    height: 29px;
}
.zoomrow-box > .option {
    width: 118px;
    margin-left: 4px;
}
.sv {
    width: 29px;
    border-left: 2px solid #000;
    background: var(--teal);
    line-height: 29px;
}
.sv-color {
    width: 68px;
    padding: 1px 1px 1px 5px;
    background: #18e818;
}
.zoomrow .sv-color .option {
    height: 27px;
    background: #18e818;
}
.show-all {
    display: flex;
    gap: 4px;
    padding-top: 2px;
    white-space: nowrap;
}
.show-all input {
    appearance: none;
    width: 13px;
    height: 13px;
    margin-top: 3px;
    border: 1px solid;
    border-color: var(--green-light) var(--green-dark) var(--green-dark) var(--green-light);
}
.acts {
    display: flex;
    gap: 4px;
    height: 29px;
}
.pane-cats .acts {
    justify-content: flex-end;
    margin-bottom: 2px;
}
.acts button, .hist-foot button {
    display: grid;
    place-items: center;
    width: 30px;
}
.acts .wide {
    width: 34px;
}
.acts svg, .hist-foot svg, .bottom svg {
    width: 22px;
    height: 22px;
}
.acts .wide svg {
    width: 26px;
}
.measure {
    height: 20px;
    border: 1px solid #000;
    border-top: 0;
    text-align: center;
    line-height: 19px;
}
.erf-line {
    height: 22px;
    padding-left: 2px;
    border: 1px solid #000;
    background: var(--cream);
    line-height: 20px;
}
.bottom {
    display: flex;
    gap: 4px;
    padding: 2px;
    height: 34px;
    background: var(--teal);
}
.bottom button {
    display: grid;
    place-items: center;
    width: 30px;
}
.bottom .close {
    flex: 1;
}
.bottom .hot {
    border: 4px solid #d11;
}
.bottom .hot svg {
    outline: 0;
}

/* Results histogram */
.histogram {
    left: 1399px;
    top: 474px;
    width: 467px;
    background: var(--green);
}
.hist-body {
    padding: 3px 5px 4px 4px;
    border: 1px solid #000;
}
.hist-top {
    display: flex;
    gap: 2px;
}
.hist-left {
    width: 102px;
    display: flex;
    flex-direction: column;
    border: 1px solid #000;
    background: var(--teal);
}
.radios {
    display: grid;
    padding: 1px 4px 0;
    border-bottom: 2px solid #000;
    line-height: 27px;
}
.radios label {
    display: flex;
    align-items: center;
    gap: 7px;
}
.radios input {
    appearance: none;
    width: 10px;
    height: 10px;
    margin-left: 2px;
    border: 2px solid;
    border-color: var(--teal-light) var(--teal-dark) var(--teal-dark) var(--teal-light);
    transform: rotate(45deg);
}
.radios input:checked {
    background: #c8004c;
}
.hist-left .scroll-box {
    flex: 1;
}
.hist-left .acts {
    padding: 0 2px;
    margin: 2px 0 2px;
}
.histogram .list {
    border-color: var(--teal-dark) var(--teal-light) var(--teal-light) var(--teal-dark);
}
.histogram .vscroll, .histogram .hscroll {
    background: #84b8b8;
    border-color: var(--teal-dark);
}
.histogram .vscroll i, .histogram .hscroll i {
    border-color: var(--teal-light) var(--teal-dark) var(--teal-dark) var(--teal-light);
    background: var(--teal);
}
.histogram .list .on {
    color: var(--teal);
}
.chart {
    flex: 1;
    min-width: 0;
    border: 1px solid #000;
    background: var(--teal);
}
.chart h3 {
    width: 258px;
    height: 22px;
    margin: 4px auto 0;
    border: 1px solid #000;
    background: #b0ffff;
    box-shadow: 2px 2px 0 #777;
    font-style: italic;
    line-height: 22px;
    text-align: center;
    white-space: nowrap;
}
.bars, .bins {
    display: grid;
    grid-template-columns: repeat(7, 1fr);
    padding: 0 9px 0 5px;
}
.bars {
    height: 142px;
    align-items: end;
    border-bottom: 4px solid #000;
    text-align: center;
}
.bars i {
    display: block;
    border: 1px solid #000;
    border-right-width: 0;
    border-bottom: 0;
    background: var(--red);
}
.bars div:last-child i {
    border-right-width: 1px;
}
.bars .pick {
    color: #d11a1a;
}
.bins {
    margin-top: 1px;
    line-height: 15px;
    text-align: right;
}
.bins div {
    height: 30px;
    padding: 2px 6px 0 0;
    overflow: hidden;
    border: 1px solid #000;
    border-right-width: 0;
    background: var(--red);
}
.bins div:last-child {
    border-right-width: 1px;
}
.chart .hscroll {
    margin: 7px 1px 2px;
}
.hscroll.short i {
    flex: none;
    width: 32px;
}
.chart-foot {
    display: flex;
    border-top: 2px solid #000;
}
.chart-foot .scroll-box {
    width: 92px;
}
.chart-foot .list {
    padding: 1px 2px 0;
}
.resolution {
    flex: 1;
    display: flex;
    flex-direction: column;
    padding: 0 2px 2px 6px;
    border: 2px solid #000;
    border-top: 0;
    border-left-width: 1px;
}
.resolution label {
    text-align: center;
}
.resolution output {
    margin-top: 4px;
}
.resolution input {
    appearance: none;
    height: 14px;
    margin: 2px 0 0 -4px;
    border: 1px solid;
    border-color: var(--teal-dark) var(--teal-light) var(--teal-light) var(--teal-dark);
    background: #84b8b8;
}
.resolution input::-webkit-slider-thumb {
    appearance: none;
    width: 30px;
    height: 12px;
    border: 1px solid;
    border-color: var(--teal-light) var(--teal-dark) var(--teal-dark) var(--teal-light);
    background: linear-gradient(90deg, transparent 13px, var(--teal-dark) 13px 14px, transparent 14px), var(--teal);
}
.sash {
    height: 12px;
    margin: 0 -5px;
    padding: 1px 10px;
    background: linear-gradient(transparent 5px, var(--green-light) 5px 6px, transparent 6px);
}
.sash i {
    display: block;
    width: 9px;
    height: 9px;
    margin-left: auto;
    border: 1px solid;
    border-color: var(--green-light) var(--green-dark) var(--green-dark) var(--green-light);
    background: var(--green);
}
.overview {
    display: grid;
    place-items: center;
    height: 162px;
    border: 1px solid #000;
    outline: 1px solid var(--green-light);
}
.overview svg {
    width: 62px;
    height: 122px;
}
.hist-foot {
    display: flex;
    gap: 3px;
    height: 41px;
    margin-top: 2px;
}
.hist-foot .raised {
    margin: 2px 0;
}
.hist-foot .big {
    width: 38px;
}
.hist-foot .big svg {
    width: 30px;
    height: 30px;
}
.count {
    flex: 1;
    padding-left: 3px;
    border: 1px solid #000;
    background: var(--teal);
    line-height: 39px;
    white-space: nowrap;
}
.hist-close {
    height: 26px;
    margin: 1px;
}

/* input method bar */
.ime {
    position: absolute;
    left: 1883px;
    top: 1029px;
    display: flex;
    align-items: center;
    gap: 6px;
    height: 26px;
    padding-right: 4px;
    background: linear-gradient(90deg, transparent 14px, #fff 14px);
    color: #446;
    font: bold 16px/20px "Noto Sans CJK SC", sans-serif;
}
.ime svg {
    width: 16px;
    height: 16px;
}
.ime .ime-logo {
    width: 26px;
    height: 26px;
}
```
